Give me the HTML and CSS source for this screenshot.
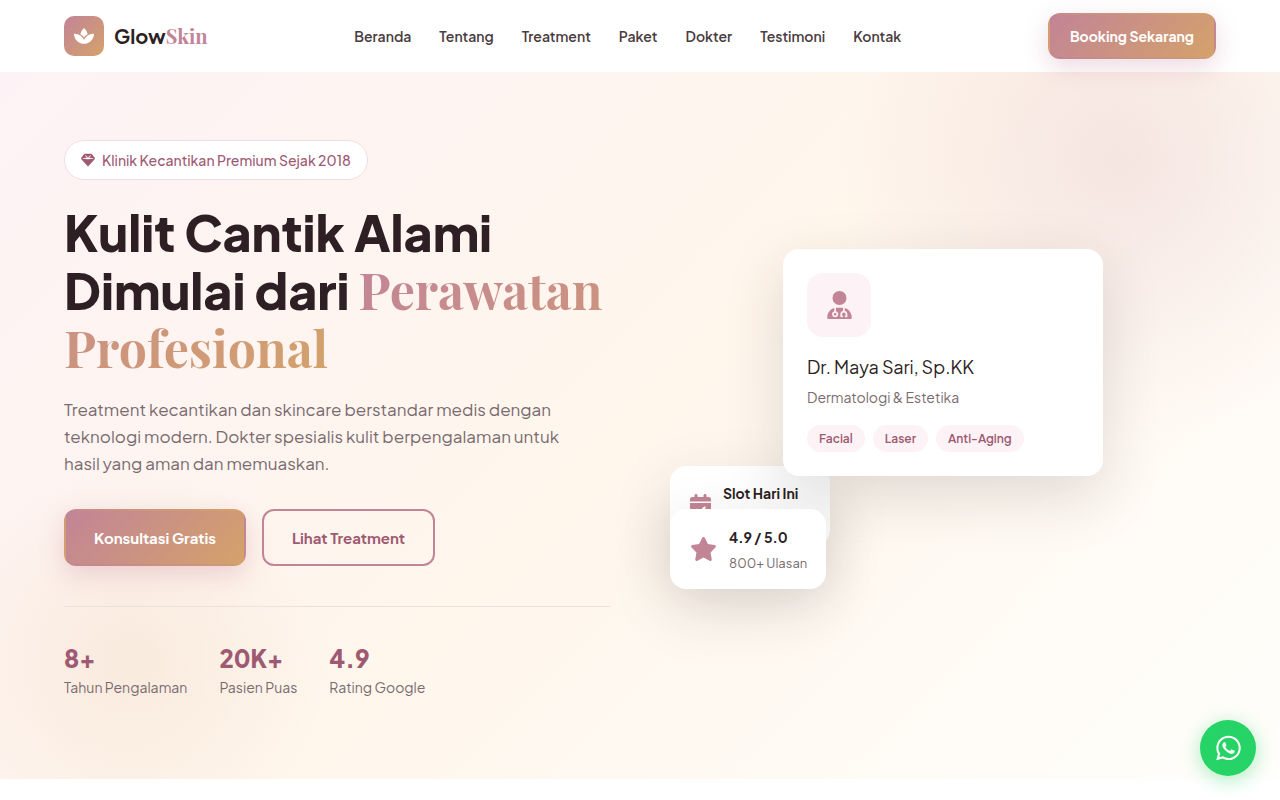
FILE: index.html
```html
<!DOCTYPE html>
<html lang="id">
<head>
<meta charset="utf-8">
<meta name="viewport" content="width=device-width, initial-scale=1">
<title>GlowSkin</title>
<link rel="stylesheet" href="styles.css">
</head>
<body>
<header class="header">
  <a class="logo" href="#beranda">
    <span class="logo-icon"><svg viewBox="0 0 576 512" width="20" height="18" aria-hidden="true"><path d="M568.25 192c-29.04.13-135.01 6.16-213.84 83-33.12 29.63-53.36 63.3-66.41 94.86-13.05-31.56-33.29-65.23-66.41-94.86-78.83-76.84-184.8-82.87-213.84-83-4.41-.02-7.79 3.4-7.75 7.82.23 27.92 7.14 126.14 88.77 199.3C172.79 480.94 256 480 288 480s115.19.95 199.23-80.88c81.64-73.17 88.54-171.38 88.77-199.3.04-4.42-3.34-7.84-7.75-7.82zM287.98 302.6c12.82-18.85 27.6-35.78 44.09-50.52 19.09-18.61 39.58-33.3 60.26-45.18-16.44-70.5-51.72-133.05-96.73-172.22-4.11-3.58-11.02-3.58-15.14 0-44.99 39.14-80.27 101.63-96.74 172.07 20.37 11.7 40.5 26.14 59.22 44.39a282.768 282.768 0 0 1 45.04 51.46z"/></svg></span>
    <span class="logo-text">Glow<span class="logo-accent">Skin</span></span>
  </a>
  <nav class="nav">
    <a href="#beranda">Beranda</a>
    <a href="#tentang">Tentang</a>
    <a href="#treatment">Treatment</a>
    <a href="#paket">Paket</a>
    <a href="#dokter">Dokter</a>
    <a href="#testimoni">Testimoni</a>
    <a href="#kontak">Kontak</a>
  </nav>
  <a class="btn btn-primary btn-small" href="#booking">Booking Sekarang</a>
</header>

<main class="hero" id="beranda">
  <section class="hero-content">
    <div class="badge">
      <svg viewBox="0 0 512 512" width="14" height="14" aria-hidden="true"><path d="M116.7 33.8c4.500-6.100 11.700-9.800 19.300-9.800H376c7.600 0 14.800 3.600 19.300 9.800l112 152c6.800 9.200 6.100 21.900-1.500 30.400l-232 256c-4.500 5-11 7.900-17.800 7.900s-13.200-2.900-17.800-7.900l-232-256c-7.700-8.500-8.300-21.200-1.500-30.400l112-152zm38.500 39.800c-3.300 2.500-4.200 7-2.100 10.500l57.400 95.600L63.300 192c-4.100 .3-7.300 3.800-7.300 8s3.200 7.600 7.300 8l192 16c.4 0 .9 0 1.300 0l192-16c4.100-.3 7.300-3.800 7.300-8s-3.200-7.600-7.300-8L301.500 179.800l57.400-95.600c2.100-3.500 1.200-8.100-2.100-10.500s-7.900-2-10.700 1L256 172.200 165.900 74.600c-2.800-3-7.400-3.400-10.700-1z"/></svg>
      <span>Klinik Kecantikan Premium Sejak 2018</span>
    </div>
    <h1 class="title">Kulit Cantik Alami<br>Dimulai dari <span class="title-accent">Perawatan<br>Profesional</span></h1>
    <p class="lead">Treatment kecantikan dan skincare berstandar medis dengan<br>teknologi modern. Dokter spesialis kulit berpengalaman untuk<br>hasil yang aman dan memuaskan.</p>
    <div class="actions">
      <a class="btn btn-primary" href="#booking">Konsultasi Gratis</a>
      <a class="btn btn-outline" href="#treatment">Lihat Treatment</a>
    </div>
    <div class="stats">
      <div><strong class="stat-value">8+</strong><span class="stat-label">Tahun Pengalaman</span></div>
      <div><strong class="stat-value">20K+</strong><span class="stat-label">Pasien Puas</span></div>
      <div><strong class="stat-value">4.9</strong><span class="stat-label">Rating Google</span></div>
    </div>
  </section>

  <section class="hero-visual">
    <div class="float-card float-slot">
      <svg viewBox="0 0 448 512" width="21" height="24" aria-hidden="true"><path d="M128 0c17.700 0 32 14.300 32 32V64H288V32c0-17.700 14.300-32 32-32s32 14.300 32 32V64h48c26.500 0 48 21.500 48 48v48H0V112C0 85.500 21.500 64 48 64H96V32c0-17.700 14.300-32 32-32zM0 192H448V464c0 26.500-21.500 48-48 48H48c-26.500 0-48-21.500-48-48V192zM329 305c9.400-9.400 9.400-24.600 0-33.900s-24.600-9.400-33.900 0l-95 95-47-47c-9.400-9.400-24.600-9.400-33.900 0s-9.400 24.600 0 33.900l64 64c9.400 9.400 24.600 9.400 33.900 0L329 305z"/></svg>
      <strong class="float-title">Slot Hari Ini</strong>
    </div>
    <article class="doctor-card">
      <div class="doctor-icon"><svg viewBox="0 0 448 512" width="25" height="28" aria-hidden="true"><path d="M224 256A128 128 0 1 0 224 0a128 128 0 1 0 0 256zm-96 55.200C54 332.900 0 401.300 0 482.300C0 498.700 13.300 512 29.700 512H418.300c16.400 0 29.700-13.300 29.700-29.700c0-81-54-149.400-128-171.100V362c27.600 7.100 48 32.200 48 62v40c0 8.800-7.200 16-16 16H336c-8.800 0-16-7.200-16-16s7.200-16 16-16V424c0-17.700-14.300-32-32-32s-32 14.300-32 32v24c8.800 0 16 7.200 16 16s-7.200 16-16 16H256c-8.800 0-16-7.200-16-16V424c0-29.800 20.400-54.900 48-62V304.900c-6-.6-12.100-.9-18.300-.9H178.300c-6.200 0-12.300 .3-18.300 .9v65.400c23.100 6.900 40 28.300 40 53.700c0 30.900-25.100 56-56 56s-56-25.100-56-56c0-25.400 16.900-46.800 40-53.700V311.200zM144 448a24 24 0 1 0 0-48 24 24 0 1 0 0 48z"/></svg></div>
      <h2 class="doctor-name">Dr. Maya Sari, Sp.KK</h2>
      <p class="doctor-role">Dermatologi &amp; Estetika</p>
      <div class="tags"><span class="tag">Facial</span><span class="tag">Laser</span><span class="tag">Anti-Aging</span></div>
    </article>
    <div class="float-card float-rating">
      <svg viewBox="0 0 576 512" width="27" height="24" aria-hidden="true"><path d="M316.900 18C311.600 7 300.400 0 288.100 0s-23.400 7-28.800 18L195 150.300 51.400 171.500c-12 1.800-22 10.200-25.700 21.700s-.7 24.200 7.900 32.700L137.800 329 113.200 474.700c-2 12 3 24.200 12.900 31.300s23 8 33.800 2.300l128.300-68.500 128.300 68.500c10.800 5.700 23.900 4.900 33.800-2.300s14.900-19.300 12.900-31.300L438.500 329 542.700 225.900c8.600-8.500 11.700-21.200 7.900-32.700s-13.700-19.900-25.700-21.700L381.200 150.300 316.900 18z"/></svg>
      <div><strong class="float-title">4.9 / 5.0</strong><span class="float-note">800+ Ulasan</span></div>
    </div>
  </section>
</main>

<a class="whatsapp" href="#whatsapp" aria-label="WhatsApp"><svg viewBox="0 0 448 512" width="25" height="28" aria-hidden="true"><path d="M380.900 97.100C339 55.100 283.200 32 223.900 32c-122.400 0-222 99.600-222 222 0 39.100 10.200 77.300 29.600 111L0 480l117.700-30.900c32.400 17.700 68.900 27 106.100 27h.1c122.300 0 224.100-99.600 224.100-222 0-59.300-25.200-115-67.100-157zm-157 341.600c-33.200 0-65.700-8.900-94-25.700l-6.700-4-69.800 18.300L72 359.200l-4.400-7c-18.500-29.400-28.200-63.300-28.200-98.200 0-101.700 82.800-184.500 184.600-184.500 49.300 0 95.600 19.200 130.400 54.100 34.800 34.900 56.200 81.200 56.100 130.500 0 101.800-84.900 184.600-186.600 184.600zm101.200-138.200c-5.500-2.800-32.800-16.200-37.900-18-5.100-1.900-8.800-2.800-12.500 2.800-3.700 5.600-14.300 18-17.600 21.800-3.200 3.700-6.500 4.200-12 1.400-32.600-16.300-54-29.100-75.500-66-5.700-9.800 5.700-9.100 16.300-30.300 1.800-3.700.9-6.900-.5-9.700-1.400-2.800-12.500-30.100-17.100-41.200-4.500-10.800-9.100-9.300-12.500-9.500-3.200-.2-6.900-.2-10.600-.2-3.700 0-9.700 1.400-14.800 6.900-5.100 5.600-19.400 19-19.400 46.300 0 27.300 19.900 53.700 22.600 57.400 2.800 3.700 39.100 59.700 94.800 83.800 35.200 15.200 49 16.500 66.600 13.900 10.700-1.600 32.800-13.400 37.400-26.400 4.600-13 4.600-24.100 3.200-26.400-1.300-2.500-5-3.900-10.500-6.600z"/></svg></a>
</body>
</html>
```

FILE: styles.css
```css
:root {
  --rose: #c28497;
  --rose-dark: #9e5a72;
  --gold: #d4a26a;
  --blush: #fdf2f5;
  --ink: #2d1f24;
  --muted: #7a6b6f;
  --gradient: linear-gradient(135deg, var(--rose), var(--gold));
  --shadow: 0 20px 60px rgba(45, 31, 36, 0.15);
  --serif: "Playfair Display", "Liberation Serif", serif;
}

* { box-sizing: border-box; margin: 0; }

body {
  background: #fff;
  color: var(--ink);
  font-family: "Plus Jakarta Sans", Inter, sans-serif;
  font-size: 16px;
}

a { color: inherit; text-decoration: none; }
svg { display: block; flex: none; fill: currentColor; }

.header {
  display: flex;
  align-items: center;
  justify-content: space-between;
  min-height: 72px;
  padding: 0 64px;
}

.logo { display: flex; align-items: center; gap: 10px; }
.logo-icon {
  display: grid;
  place-items: center;
  width: 40px;
  height: 40px;
  border-radius: 10px;
  background: var(--gradient);
  color: #fff;
}
.logo-text { font-size: 20px; font-weight: 700; line-height: 32px; }
.logo-accent { font-family: var(--serif); color: var(--rose); }

.nav { display: flex; gap: 28px; font-size: 14px; font-weight: 600; color: #4a3c40; }

.btn {
  display: inline-block;
  padding: 16px 28px;
  border: 2px solid transparent;
  border-radius: 12px;
  font-size: 15px;
  font-weight: 700;
  line-height: 21px;
  white-space: nowrap;
}
.btn-primary { background: var(--gradient); color: #fff; box-shadow: 0 8px 24px rgba(194, 132, 151, 0.3); }
.btn-outline { border-color: #c28497; color: var(--rose-dark); }
.btn-small { padding: 11px 20px; font-size: 14px; line-height: 20px; }

.hero {
  display: grid;
  grid-template-columns: 1fr 1fr;
  gap: 60px;
  padding: 68px 64px 80px;
  background:
    radial-gradient(circle at 1120px 90px, rgba(194, 132, 151, 0.16), transparent 280px),
    radial-gradient(circle at 128px 590px, rgba(212, 162, 106, 0.13), transparent 200px),
    linear-gradient(135deg, #fdf2f5 0%, #fff6ec 50%, #fffefb 100%);
}

.badge {
  display: inline-flex;
  align-items: center;
  gap: 7px;
  padding: 9px 16px;
  border: 1px solid #f0dfe4;
  border-radius: 20px;
  background: #fff;
  color: var(--rose-dark);
  font-size: 14px;
  font-weight: 500;
  line-height: 20px;
}

.title {
  margin-top: 23px;
  font-size: 50px;
  font-weight: 800;
  line-height: 58px;
  white-space: nowrap;
}
.title-accent {
  font-family: var(--serif);
  font-weight: 700;
  line-height: 1;
  background: var(--gradient);
  background-clip: text;
  -webkit-background-clip: text;
  color: transparent;
}

.lead { margin-top: 19px; color: var(--muted); font-size: 17px; line-height: 27px; }
.actions { display: flex; gap: 16px; margin-top: 32px; }

.stats {
  display: flex;
  gap: 32px;
  margin-top: 40px;
  padding-top: 36px;
  border-top: 1px solid #eee0db;
}
.stat-value { display: block; color: var(--rose-dark); font-size: 24px; font-weight: 800; line-height: 30px; }
.stat-label { display: block; margin-top: 3px; color: var(--muted); font-size: 14px; line-height: 23px; }

.hero-visual { position: relative; align-self: start; margin-top: 109px; }

.doctor-card {
  position: relative;
  width: 320px;
  margin: 0 auto;
  padding: 24px;
  border-radius: 16px;
  background: #fff;
  box-shadow: var(--shadow);
}
.doctor-icon {
  display: grid;
  place-items: center;
  width: 64px;
  height: 64px;
  border-radius: 16px;
  background: var(--blush);
  color: var(--rose);
}
.doctor-name { margin-top: 16px; font-size: 18px; font-weight: 400; line-height: 28px; }
.doctor-role { margin-top: 5px; color: var(--muted); font-size: 14px; line-height: 23px; }
.tags { display: flex; gap: 8px; margin-top: 16px; }
.tag {
  padding: 4px 12px;
  border-radius: 14px;
  background: var(--blush);
  color: var(--rose-dark);
  font-size: 12px;
  font-weight: 600;
  line-height: 19px;
}

.float-card {
  position: absolute;
  left: 0;
  display: flex;
  align-items: center;
  min-height: 80px;
  padding: 14px 20px;
  border-radius: 16px;
  background: #fff;
  box-shadow: var(--shadow);
  color: var(--rose);
}
.float-slot { top: 217px; width: 160px; gap: 12px; }
.float-slot .float-title { align-self: flex-start; }
.float-rating { top: 260px; width: 156px; gap: 12px; }
.float-title { display: block; color: var(--ink); font-size: 14px; line-height: 27px; white-space: nowrap; }
.float-note { display: block; color: var(--muted); font-size: 13px; line-height: 24px; white-space: nowrap; }

.whatsapp {
  position: fixed;
  right: 24px;
  bottom: 24px;
  display: grid;
  place-items: center;
  width: 56px;
  height: 56px;
  border-radius: 50%;
  background: #25d366;
  color: #fff;
  box-shadow: 0 4px 20px rgba(37, 211, 102, 0.4);
}
```
